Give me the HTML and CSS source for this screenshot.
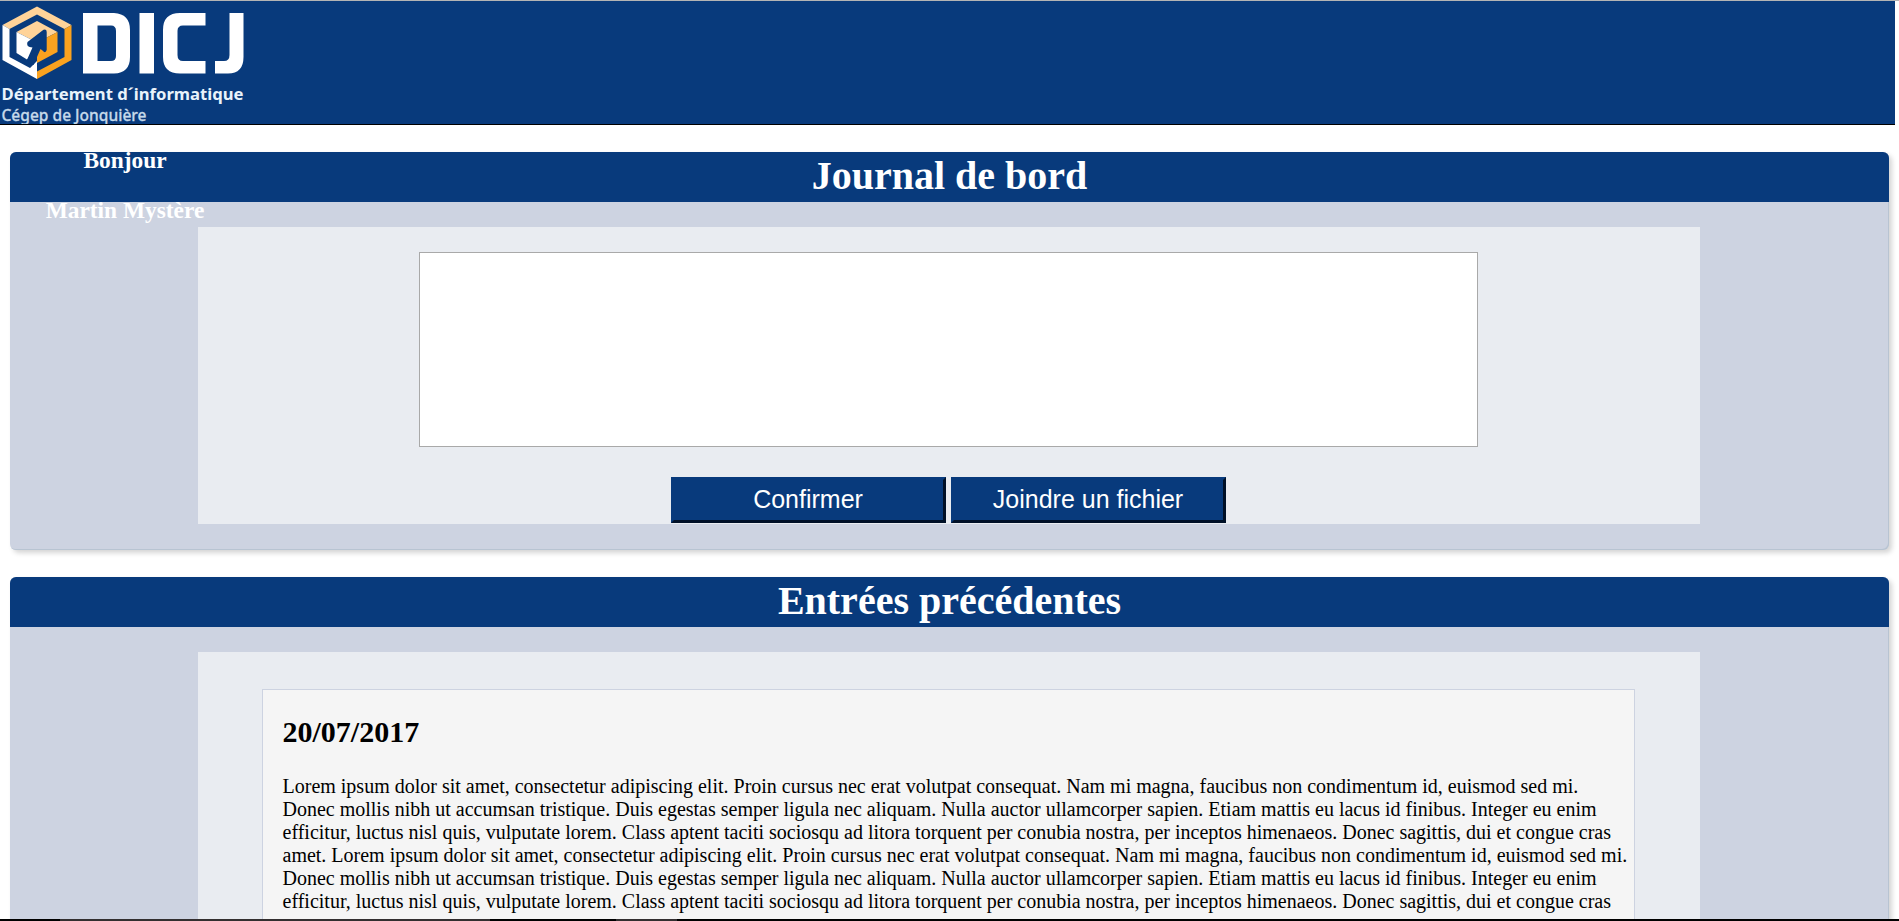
FILE: index.html
```html
<!DOCTYPE html>
<html lang="fr">
<head>
<meta charset="utf-8">
<title>Journal de bord</title>
<link rel="stylesheet" href="styles.css">
</head>
<body>
<header class="banner">
  <svg class="logo" width="250" height="123" viewBox="0 1 250 123" role="img" aria-label="DICJ">
    <path fill="#ffd399" d="M37 6.500 71.500 25 64.500 29 37 14.500 9.500 29 2.500 25z"/>
    <path fill="#fff" d="M2.500 25 9.500 29V57L30 68 37 61V79L2.500 60z"/>
    <path fill="#faa21f" d="M71.500 25 64.500 29V57L37 71.500V79L71.500 60z"/>
    <path fill="#ffd399" d="M37 21 57.500 32 37 42.500 16.500 32z"/>
    <path fill="#fff" d="M16.500 32 37 42.500V50L27 59.500 16.500 53z"/>
    <path fill="#faa21f" d="M57.500 32 37 42.500V63L57.500 52z"/>
    <path fill="#083a7c" d="M43.500 29.800Q46.800 28.500 46.700 32V50Q45.500 54 42.500 50.500L40.500 49 33.500 65 26.500 61 32.500 47.500Q25.500 47 27.500 42Z"/>
    <path fill="#fff" fill-rule="evenodd" d="M83 13H114Q130 14 130 30V57Q130 73 114 73.500H83zM97.500 25.500V61H111Q116 61 116 56V31Q116 25.500 111 25.500z"/>
    <path fill="#fff" d="M139.500 13H154V73.500H139.500zM205.500 13V25.500H183Q177.500 25.500 177.500 31V55Q177.500 61 183 61H205.500V73.500H180Q163 73.500 163 57V30Q163 13 180 13zM229.500 13H243.500V57Q243.500 73.500 228 73.500H215V61H224Q229.500 61 229.500 55z"/>
    <text class="logo-dept" x="1.500" y="100" textLength="242" lengthAdjust="spacingAndGlyphs">Département d´informatique</text>
    <text class="logo-school" x="1.500" y="120.500" textLength="145" lengthAdjust="spacingAndGlyphs">Cégep de Jonquière</text>
  </svg>
  <div class="greeting">
    <h3>Bonjour</h3>
    <h3>Martin Mystère</h3>
  </div>
</header>
<main class="page">
  <section class="panel">
    <h1 class="panel-title">Journal de bord</h1>
    <form class="panel-body composer">
      <textarea class="entry-input" aria-label="Entrée"></textarea>
      <div class="actions">
        <button class="btn" type="button">Confirmer</button>
        <button class="btn" type="button">Joindre un fichier</button>
      </div>
    </form>
  </section>
  <section class="panel">
    <h1 class="panel-title">Entrées précédentes</h1>
    <div class="panel-body history">
      <article class="entry">
        <h2>20/07/2017</h2>
        <p>Lorem ipsum dolor sit amet, consectetur adipiscing elit. Proin cursus nec erat volutpat consequat. Nam mi magna, faucibus non condimentum id, euismod sed mi. Donec mollis nibh ut accumsan tristique. Duis egestas semper ligula nec aliquam. Nulla auctor ullamcorper sapien. Etiam mattis eu lacus id finibus. Integer eu enim efficitur, luctus nisl quis, vulputate lorem. Class aptent taciti sociosqu ad litora torquent per conubia nostra, per inceptos himenaeos. Donec sagittis, dui et congue cras amet. Lorem ipsum dolor sit amet, consectetur adipiscing elit. Proin cursus nec erat volutpat consequat. Nam mi magna, faucibus non condimentum id, euismod sed mi. Donec mollis nibh ut accumsan tristique. Duis egestas semper ligula nec aliquam. Nulla auctor ullamcorper sapien. Etiam mattis eu lacus id finibus. Integer eu enim efficitur, luctus nisl quis, vulputate lorem. Class aptent taciti sociosqu ad litora torquent per conubia nostra, per inceptos himenaeos. Donec sagittis, dui et congue cras amet.</p>
      </article>
    </div>
  </section>
</main>
<div class="bottom-edge"></div>
</body>
</html>
```
FILE: styles.css
```css
* { box-sizing: border-box; }
body {
  margin: 0;
  height: 921px;
  overflow: hidden;
  display: flex;
  flex-direction: column;
  background: #fff;
  border-top: 1px solid #b4b4b4;
  font: 20px/23px "Liberation Serif", "Times New Roman", serif;
  color: #000;
}
h1, h2, h3, p { margin: 0; }
.banner {
  position: relative;
  flex: none;
  width: 1895px;
  height: 124px;
  background: #083a7c;
  border-bottom: 1px solid #000;
}
.logo { display: block; }
.logo-dept { font: bold 16.5px "Noto Sans", sans-serif; fill: #e9f3fb; }
.logo-school { font: 500 17px "Noto Sans", sans-serif; fill: #c5d9ea; stroke: #c5d9ea; stroke-width: .3px; }
.greeting {
  position: absolute;
  top: 146px;
  left: 0;
  width: 250px;
  display: grid;
  gap: 23px;
  text-align: center;
  color: #fff;
}
.greeting h3 { font-size: 23.4px; line-height: 27px; }
.page {
  flex: 1;
  min-height: 0;
  overflow: hidden;
  display: flex;
  flex-direction: column;
  gap: 27px;
  padding: 27px 10px 0;
}
.panel {
  flex: none;
  width: 1879px;
  background: #cdd3e1;
  border-radius: 6px;
  box-shadow: inset -1px -1px 0 #b8c4d2, 3px 3px 5px rgba(0, 0, 0, .17);
  padding-bottom: 26px;
}
.panel-title {
  height: 50px;
  border-radius: 6px 6px 0 0;
  background: #083a7c;
  color: #fff;
  font-size: 40px;
  line-height: 48px;
  text-align: center;
}
.panel-body {
  width: 1502px;
  margin: 25px 0 0 188px;
  background: #e9ecf1;
}
.composer {
  height: 297px;
  padding: 25px 1px 0 0;
  display: flex;
  flex-direction: column;
  align-items: center;
  gap: 30px;
}
.entry-input {
  width: 1059px;
  height: 195px;
  border: 1px solid #a9a9a9;
  background: #fff;
  resize: none;
}
.actions { display: flex; gap: 5px; padding-right: 1px; }
.btn {
  width: 275px;
  height: 46px;
  padding: 0 0 2px;
  border: 3px solid;
  border-color: #083a7c #001027 #001027 #083a7c;
  background: #083a7c;
  color: #fff;
  font: 25px "Liberation Sans", Arial, sans-serif;
}
.history { padding: 37px 65px 30px 64px; }
.entry {
  padding: 25px 4.5px 20px 19.5px;
  border: 1px solid #cdd3e1;
  background: #f5f5f5;
}
.entry h2 { font-size: 30px; line-height: 34px; margin-bottom: 26px; }
.bottom-edge {
  flex: none;
  height: 2px;
  background: linear-gradient(90deg, #000 60px, #332f30 60px 490px, #000 490px 616px, #332f30 616px 677px, #000 677px);
}
```
